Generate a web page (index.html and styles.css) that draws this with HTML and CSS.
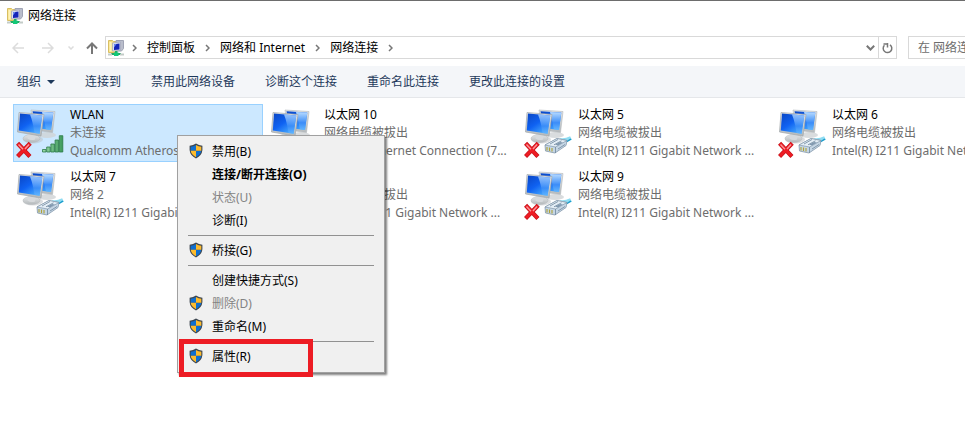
FILE: index.html
```html
<!DOCTYPE html>
<html lang="zh-CN">
<head>
<meta charset="utf-8">
<title>网络连接</title>
<link rel="stylesheet" href="styles.css">
</head>
<body>
<svg class="defs" width="0" height="0" aria-hidden="true">
  <defs>
    <linearGradient id="screen" x1="0" y1="0" x2="0.8" y2="1">
      <stop offset="0" stop-color="#0a46c4"/><stop offset="0.5" stop-color="#0f62f2"/><stop offset="1" stop-color="#4fb4ff"/>
    </linearGradient>
    <linearGradient id="gloss" x1="0" y1="0" x2="0" y2="1">
      <stop offset="0" stop-color="#b9dcff"/><stop offset="0.6" stop-color="#3c8df8"/><stop offset="1" stop-color="#63b6ff"/>
    </linearGradient>
    <linearGradient id="metal" x1="0" y1="0" x2="0" y2="1">
      <stop offset="0" stop-color="#e4e6e7"/><stop offset="1" stop-color="#b4b9bc"/>
    </linearGradient>
    <linearGradient id="bars" x1="0" y1="0" x2="1" y2="0">
      <stop offset="0" stop-color="#9fdcab"/><stop offset="1" stop-color="#3d9a5b"/>
    </linearGradient>
    <symbol id="monitors" viewBox="0 0 48 50">
      <ellipse cx="31" cy="27" rx="9" ry="3" fill="#cfd3d6" opacity="0.8"/>
      <path d="M15 2 39 3.500 36.500 24.500 18 22Z" fill="url(#metal)" stroke="#b2b7ba" stroke-width="0.600"/>
      <path d="M16.500 3.300 37.300 4.600 35 22 20 20Z" fill="url(#screen)"/>
      <path d="M26 3.900 37.300 4.600 35 22 30 21.300Z" fill="url(#gloss)"/>
      <ellipse cx="17" cy="31.500" rx="10" ry="4" fill="#b9bec2" opacity="0.5"/>
      <ellipse cx="15.500" cy="30.500" rx="8.500" ry="4" fill="url(#metal)" stroke="#b4b8bb" stroke-width="0.500"/>
      <path d="M12 24 20 26 19 31.500Q15 33 11.500 30.500Z" fill="#d7dadd"/>
      <path d="M3 4.500 28 6.500 25 28 1.500 24Z" fill="url(#metal)" stroke="#a2a8ab" stroke-width="0.700"/>
      <path d="M4 5.600 26.300 7.400 23.600 25.800 2.800 22.500Z" fill="url(#screen)"/>
      <path d="M14 6.400 26.300 7.400 23.600 25.800 18.500 25Q17 14 14 6.400Z" fill="url(#gloss)" opacity="0.8"/>
    </symbol>
    <symbol id="cross" viewBox="0 0 48 50">
      <path d="M3 36.800 12.500 47M12.800 36.800 3 47" stroke="#c41219" stroke-width="4.200" stroke-linecap="square"/>
      <path d="M3 36.800 12.500 47M12.800 36.800 3 47" stroke="#ee1c24" stroke-width="3" stroke-linecap="square"/>
      <path d="M2.500 36.500 7 41.200M13 36.500 9 41" stroke="#fa969a" stroke-width="1.400"/>
    </symbol>
    <symbol id="signal" viewBox="0 0 48 50">
      <g fill="url(#bars)" stroke="#2b7a46" stroke-width="0.800">
        <path d="M26.500 41.500h3.500v2.500h-3.500zM30.700 39h3.500v5h-3.500zM34.900 36h3.500v8h-3.500zM39.100 32h3.500v12h-3.500zM43.300 27.700h3.500V44h-3.500z"/>
      </g>
    </symbol>
    <symbol id="cable" viewBox="0 0 48 50">
      <path d="M36 32Q41 33 47 30" stroke="#8fdcf2" stroke-width="4" fill="none"/>
      <path d="M38 33.500Q43 34.500 47 31" stroke="#1c9ccc" stroke-width="1.600" fill="none"/>
      <path d="M21 37 33 30.500 43 32.500 42 37.500 31 45 21.500 43Z" fill="#c5d6e5" stroke="#8498ab" stroke-width="0.800"/>
      <path d="M21 37 31.500 39 43 32.500 33 30.500Z" fill="#e4eef6" stroke="#8498ab" stroke-width="0.700"/>
      <path d="M31.500 39v6M34 41l7-4.500M26 36l8-4.500M30 36.800l7.500-4" stroke="#6f869c" stroke-width="0.800"/>
      <path d="M23 39v3.500M25.500 39.500V43M28 40v3.500" stroke="#b0a338" stroke-width="1.100"/>
      <path d="M31 36.500 36 34 39 34.500 34 37.500Z" fill="#8199b0"/>
    </symbol>
    <symbol id="shield" viewBox="0 0 14 16">
      <path d="M7 0.600Q9.800 2.600 13.400 2.700V7Q13 12.500 7 15.400 1 12.500 0.600 7V2.700Q4.200 2.600 7 0.600Z" fill="#3e4750"/>
      <path d="M7 1.900V7.800H1.700V3.700Q4.600 3.500 7 1.900ZM7 7.800H12.300Q11.800 11.800 7 14.200Z" fill="#0f6fd1"/>
      <path d="M7 1.900V7.800H12.300V3.700Q9.400 3.500 7 1.900ZM7 7.800H1.700Q2.200 11.800 7 14.200Z" fill="#fdbb2d"/>
    </symbol>
    <symbol id="network" viewBox="0 0 16 16">
      <path d="M0.500 0.500h4l1 1h3v11h-8z" fill="#f7df83" stroke="#d8bf62"/>
      <path d="M1.500 2h2v9.500h-2z" fill="#fff3b8"/>
      <path d="M8 0.500h7.500v8L13.500 11H8z" fill="#b9bdcb" stroke="#a0a4b5"/>
      <path d="M4.500 3 12.500 2v8.500l-8 0.500z" fill="#dfe2ef" stroke="#a4a8bb" stroke-width="0.800"/>
      <path d="M6 4.200 11.500 3.500v6L6 10z" fill="#1525b8"/>
      <path d="M6 4.200 8.500 4 6 7.500z" fill="#6e91f5"/>
      <path d="M7 11h2.500v2H13v2H3v-2h4z" fill="#20ae65"/>
      <path d="M6 12.500h4.500V16H6z" fill="#12c978"/>
      <path d="M0 13.500h4v2H0zM12 13.500h4v2h-4z" fill="#c3ccc8"/>
    </symbol>
    <symbol id="chevron" viewBox="0 0 5 8">
      <path d="M1 1 4 4 1 7" fill="none" stroke="currentColor" stroke-width="1.500"/>
    </symbol>
  </defs>
</svg>

<div class="window">
  <header class="titlebar">
    <svg class="icon16"><use href="#network"/></svg>
    <h1 class="title">网络连接</h1>
  </header>

  <div class="navrow">
    <nav class="history">
      <button class="nav" aria-label="后退" disabled><svg width="12" height="12" viewBox="0 0 12 12"><path d="M12 6H1M6 1 1 6l5 5" /></svg></button>
      <button class="nav forward" aria-label="前进" disabled><svg width="12" height="12" viewBox="0 0 12 12"><path d="M0 6h11M6 1l5 5-5 5"/></svg></button>
      <button class="nav recent" aria-label="最近位置" disabled><svg width="6" height="4" viewBox="0 0 6 4"><path d="M0.500 0.500 3 3 5.500 0.500"/></svg></button>
      <button class="nav up" aria-label="向上"><svg width="12" height="12" viewBox="0 0 12 12"><path d="M6 12V1.500M1 6.500l5-5 5 5"/></svg></button>
    </nav>
    <div class="address">
      <svg class="icon16"><use href="#network"/></svg>
      <svg class="chevron"><use href="#chevron"/></svg>
      <a class="crumb" href="#">控制面板</a>
      <svg class="chevron"><use href="#chevron"/></svg>
      <a class="crumb" href="#">网络和 Internet</a>
      <svg class="chevron"><use href="#chevron"/></svg>
      <a class="crumb" href="#">网络连接</a>
      <svg class="chevron"><use href="#chevron"/></svg>
      <button class="drop" aria-label="以前的位置"><svg width="9" height="6" viewBox="0 0 9 6"><path d="M0.800 0.800 4.500 4.500 8.200 0.800"/></svg></button>
      <button class="refresh" aria-label="刷新"><svg width="11" height="12" viewBox="0 0 11 12"><path d="M8 2.800A4.300 4.300 0 1 1 2.400 3.300M5.500 2H1.500M5.500 1V5.500"/></svg></button>
    </div>
    <input class="search" type="text" aria-label="搜索" placeholder="在 网络连接 中搜索">
  </div>

  <div class="toolbar" role="toolbar">
    <button class="command">组织<span class="caret"></span></button>
    <button class="command">连接到</button>
    <button class="command">禁用此网络设备</button>
    <button class="command">诊断这个连接</button>
    <button class="command">重命名此连接</button>
    <button class="command">更改此连接的设置</button>
  </div>

  <main class="content">
    <ul class="connections">
      <li class="tile selected">
        <svg class="device"><use href="#monitors"/><use href="#signal"/><use href="#cross"/></svg>
        <div class="info"><p class="name">WLAN</p><p>未连接</p><p>Qualcomm Atheros QCA61...</p></div>
      </li>
      <li class="tile">
        <svg class="device"><use href="#monitors"/><use href="#cable"/><use href="#cross"/></svg>
        <div class="info"><p class="name">以太网 10</p><p>网络电缆被拔出</p><p>Intel(R) Ethernet Connection (7...</p></div>
      </li>
      <li class="tile">
        <svg class="device"><use href="#monitors"/><use href="#cable"/><use href="#cross"/></svg>
        <div class="info"><p class="name">以太网 5</p><p>网络电缆被拔出</p><p>Intel(R) I211 Gigabit Network ...</p></div>
      </li>
      <li class="tile">
        <svg class="device"><use href="#monitors"/><use href="#cable"/><use href="#cross"/></svg>
        <div class="info"><p class="name">以太网 6</p><p>网络电缆被拔出</p><p>Intel(R) I211 Gigabit Network ...</p></div>
      </li>
      <li class="tile">
        <svg class="device"><use href="#monitors"/><use href="#cable"/></svg>
        <div class="info"><p class="name">以太网 7</p><p>网络 2</p><p>Intel(R) I211 Gigabit Network ...</p></div>
      </li>
      <li class="tile">
        <svg class="device"><use href="#monitors"/><use href="#cable"/><use href="#cross"/></svg>
        <div class="info"><p class="name">以太网 8</p><p>网络电缆被拔出</p><p>Intel(R) I211 Gigabit Network ...</p></div>
      </li>
      <li class="tile">
        <svg class="device"><use href="#monitors"/><use href="#cable"/><use href="#cross"/></svg>
        <div class="info"><p class="name">以太网 9</p><p>网络电缆被拔出</p><p>Intel(R) I211 Gigabit Network ...</p></div>
      </li>
    </ul>

    <div class="menu" role="menu">
      <button class="item" role="menuitem"><svg class="shield"><use href="#shield"/></svg>禁用(B)</button>
      <button class="item default" role="menuitem">连接/断开连接(O)</button>
      <button class="item" role="menuitem" disabled>状态(U)</button>
      <button class="item" role="menuitem">诊断(I)</button>
      <hr class="separator">
      <button class="item" role="menuitem"><svg class="shield"><use href="#shield"/></svg>桥接(G)</button>
      <hr class="separator">
      <button class="item" role="menuitem">创建快捷方式(S)</button>
      <button class="item" role="menuitem" disabled><svg class="shield"><use href="#shield"/></svg>删除(D)</button>
      <button class="item" role="menuitem"><svg class="shield"><use href="#shield"/></svg>重命名(M)</button>
      <hr class="separator">
      <button class="item" role="menuitem"><svg class="shield"><use href="#shield"/></svg>属性(R)</button>
      <div class="highlight"></div>
    </div>
  </main>
</div>
</body>
</html>
```
FILE: styles.css
```css
* {
  box-sizing: border-box;
}

body {
  margin: 0;
  background: #fff;
  color: #000;
  font: 12px/18px "Noto Sans", "Noto Sans CJK SC", sans-serif;
}

button,
input {
  margin: 0;
  padding: 0;
  border: 0;
  background: none;
  color: inherit;
  font: inherit;
}

svg {
  display: block;
  flex: none;
}

.defs {
  position: absolute;
}

.window {
  min-height: 100vh;
  overflow: hidden;
  border-top: 1px solid #6d6d6d;
}

.icon16 {
  width: 16px;
  height: 16px;
}

.titlebar {
  display: flex;
  align-items: center;
  gap: 5px;
  height: 29px;
  padding-left: 7px;
}

.title {
  margin: 0;
  font-size: 12px;
  font-weight: 400;
}

.navrow {
  display: flex;
  height: 36px;
  padding: 6px 0 7px 12px;
}

.history {
  display: flex;
  align-items: center;
  width: 93px;
}

.nav {
  color: #dcdcdc;
}

.nav path,
.drop path,
.refresh path {
  fill: none;
  stroke: currentColor;
  stroke-width: 1.5px;
}

.forward {
  margin-left: 18px;
}

.recent {
  margin-left: 14px;
}

.up {
  margin-left: 12px;
  color: #777;
}

.up path,
.drop path {
  stroke-width: 2px;
}

.address {
  display: flex;
  flex: 1;
  align-items: center;
  border: 1px solid #d9d9d9;
  padding-left: 2px;
}

.chevron {
  width: 5px;
  height: 8px;
  margin: 0 10px;
  color: #777;
}

.icon16 + .chevron {
  margin-left: 8px;
}

.crumb {
  color: inherit;
  text-decoration: none;
  white-space: nowrap;
}

.drop {
  display: grid;
  place-items: center;
  margin-left: auto;
  width: 16px;
  color: #777;
}

.refresh {
  display: grid;
  place-items: center;
  align-self: stretch;
  width: 18px;
  border-left: 1px solid #d9d9d9;
  color: #777;
}

.search {
  width: 57px;
  margin-left: 11px;
  padding-left: 9px;
  border: 1px solid #d9d9d9;
  border-right: 0;
  border-radius: 0;
}

.search::placeholder {
  color: #6d6d6d;
  opacity: 1;
}

.toolbar {
  display: flex;
  align-items: center;
  gap: 30px;
  height: 32px;
  padding-left: 17px;
  background: #f4f6f9;
  border-bottom: 1px solid #e5e7ea;
  color: #1e395b;
}

.command {
  display: flex;
  align-items: center;
  gap: 6px;
  white-space: nowrap;
}

.caret {
  border: 4px solid transparent;
  border-top-color: currentColor;
  border-bottom: 0;
}

.content {
  position: relative;
  padding: 6px 0 0 13px;
}

.connections {
  display: grid;
  grid-template-columns: repeat(4, 250px);
  gap: 4px;
  margin: 0;
  padding: 0;
  list-style: none;
}

.tile {
  display: flex;
  gap: 6px;
  height: 58px;
  padding: 1px 2px;
  border: 1px solid transparent;
  color: #6d6d6d;
}

.tile.selected {
  background: #cce8ff;
  border-color: #99d1ff;
}

.device {
  width: 48px;
  height: 50px;
  margin-top: 2px;
}

.info p {
  margin: 0;
  white-space: nowrap;
}

.info .name {
  color: #000;
}

.menu {
  position: absolute;
  top: 37px;
  left: 177px;
  width: 208px;
  padding: 4px 2px;
  background: #f0f0f0;
  border: 1px solid #a0a0a0;
  box-shadow: 2px 2px 2px rgba(0, 0, 0, 0.5);
}

.item {
  position: relative;
  display: block;
  width: 100%;
  height: 23px;
  padding-left: 32px;
  text-align: left;
}

.item.default {
  font-weight: 700;
}

.item:disabled {
  color: #838383;
}

.shield {
  position: absolute;
  top: 3px;
  left: 9px;
  width: 14px;
  height: 16px;
}

.separator {
  height: 1px;
  margin: 3px 8px;
  border: 0;
  background: #919191;
}

.highlight {
  position: absolute;
  left: 1px;
  bottom: -5px;
  width: 134px;
  height: 38px;
  border: 5px solid #ed1c24;
}
```
